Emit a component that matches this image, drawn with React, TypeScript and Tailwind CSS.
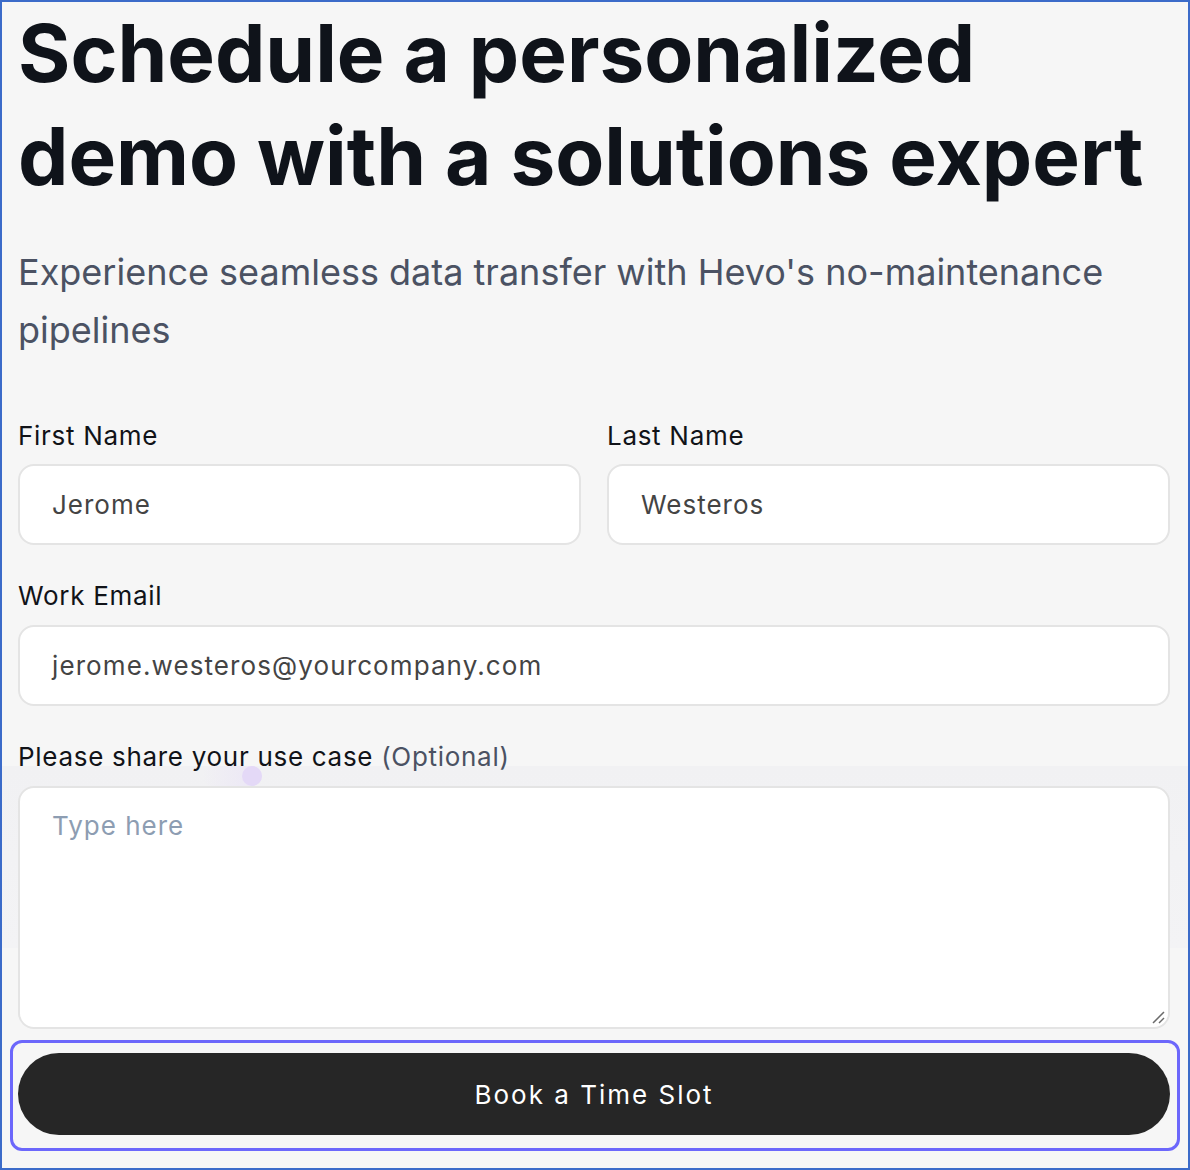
import React from "react";

export default function App() {
  const font = { fontFamily: "Inter, 'Noto Sans', sans-serif" };
  return (
    <div
      className="relative w-[1190px] h-[1170px] bg-[#f6f6f6] border-2 border-[#3b6bc9] overflow-hidden"
      style={font}
    >
      {/* subtle decorative band */}
      <div className="absolute left-0 right-0 top-[764px] h-[182px] bg-gradient-to-b from-[#f1f1f3] to-[#f3f3f5]" />
      <div className="absolute left-[200px] top-[764px] w-[60px] h-[20px] rounded-full bg-gradient-to-r from-transparent to-[#ebe6f6]" />
      <div className="absolute left-[240px] top-[764px] w-[20px] h-[20px] rounded-full bg-[#e4d9f7]" />

      <div className="relative pl-4 pr-[18px]">
        <h1 className="-mt-px text-[80px] leading-[103px] font-bold text-[#0f131a]">
          Schedule a personalized demo with a solutions expert
        </h1>
        <p className="mt-[36px] text-[36px] leading-[58px] text-[#4b5263]">
          Experience seamless data transfer with Hevo's no-maintenance pipelines
        </p>

        <div className="mt-[59px] grid grid-cols-2 gap-[26px]">
          <div>
            <label className="block text-[26px] leading-[36px] tracking-[0.7px] text-[#111318] mb-[10px]">First Name</label>
            <div className="h-[81px] rounded-[16px] border-2 border-[#e4e4e4] bg-white flex items-center px-[32px] text-[26px] tracking-[1px] text-[#444]">
              Jerome
            </div>
          </div>
          <div>
            <label className="block text-[26px] leading-[36px] tracking-[0.7px] text-[#111318] mb-[10px]">Last Name</label>
            <div className="h-[81px] rounded-[16px] border-2 border-[#e4e4e4] bg-white flex items-center px-[32px] text-[26px] tracking-[1px] text-[#444]">
              Westeros
            </div>
          </div>
        </div>

        <div className="mt-[33px]">
          <label className="block text-[26px] leading-[36px] tracking-[0.7px] text-[#111318] mb-[11px]">Work Email</label>
          <div className="h-[81px] rounded-[16px] border-2 border-[#e4e4e4] bg-white flex items-center px-[32px] text-[26px] tracking-[1.1px] text-[#444]">
            jerome.westeros@yourcompany.com
          </div>
        </div>

        <div className="mt-[33px]">
          <label className="block text-[26px] leading-[36px] tracking-[0.7px] text-[#111318] mb-[11px]">
            Please share your use case <span className="text-[#4b5263]">(Optional)</span>
          </label>
          <div className="relative h-[243px] rounded-[16px] border-2 border-[#e4e4e4] bg-white px-[32px] pt-[20px] text-[26px] leading-[36px] tracking-[1px] text-[#8d9db2]">
            Type here
            <svg
              className="absolute right-[3px] bottom-[3px]"
              width="14"
              height="14"
              viewBox="0 0 14 14"
            >
              <line x1="2" y1="13" x2="13" y2="2" stroke="#6b6b6b" strokeWidth="1.5" />
              <line x1="8" y1="13" x2="13" y2="8" stroke="#6b6b6b" strokeWidth="1.5" />
            </svg>
          </div>
        </div>

        <div className="mt-[11px] -ml-2 -mr-[10px] pl-[5px] pr-[7px] pt-[10px] pb-[13px] border-[3px] border-[#6c67fb] rounded-[12px]">
          <button className="w-full h-[82px] rounded-full bg-[#262626] text-white text-[26px] tracking-[2px] flex items-center justify-center">
            Book a Time Slot
          </button>
        </div>
      </div>
    </div>
  );
}
